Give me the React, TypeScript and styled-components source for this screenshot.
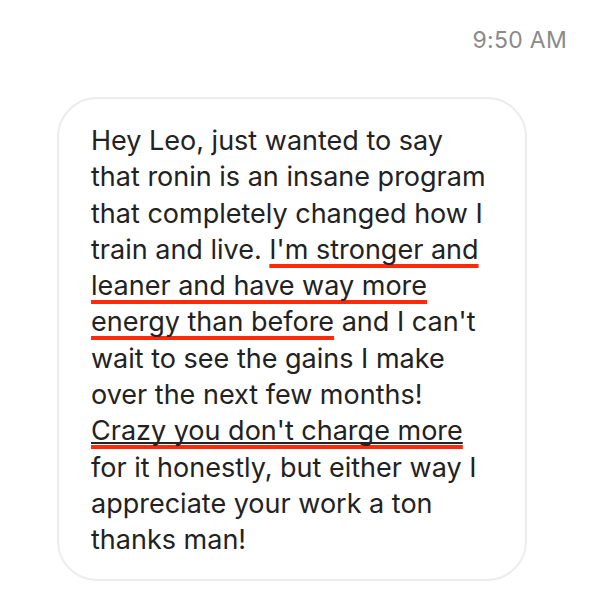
import React from "react";
import styled, { createGlobalStyle } from "styled-components";

const Global = createGlobalStyle`
  html, body { margin: 0; padding: 0; background: #ffffff; }
  body { font-family: Inter, "Noto Sans", "Liberation Sans", sans-serif; }
`;

const Page = styled.div`
  width: 600px;
  height: 592px;
  display: flex;
  flex-direction: column;
  box-sizing: border-box;
  padding: 25px 33px 0 57px;
`;

const Time = styled.div`
  align-self: flex-end;
  font-size: 23px;
  line-height: 30px;
  color: #8a8a8a;
  letter-spacing: 0.3px;
`;

const Bubble = styled.div`
  margin-top: 42px;
  width: 470px;
  box-sizing: border-box;
  border: 2px solid #ececec;
  border-radius: 40px;
  padding: 24px 16px 20px 32px;
`;

const Message = styled.p`
  margin: 0;
  font-size: 27px;
  line-height: 36.3px;
  color: #222222;
  white-space: nowrap;
`;

const Marker = styled.span`
  text-decoration: underline;
  text-decoration-color: #ff2a0a;
  text-decoration-thickness: 4px;
  text-underline-offset: 5px;
  text-decoration-skip-ink: none;
`;

const Link = styled.span`
  text-decoration: underline;
  text-decoration-color: #222222;
  text-decoration-thickness: 1.5px;
  text-underline-offset: 2px;
  text-decoration-skip-ink: none;
`;

export default function App() {
  return (
    <>
      <Global />
      <Page>
        <Time>9:50 AM</Time>
        <Bubble>
          <Message>
            Hey Leo, just wanted to say
            <br />
            that ronin is an insane program
            <br />
            that completely changed how I
            <br />
            train and live.{" "}
            <Marker>
              I'm stronger and
              <br />
              leaner and have way more
              <br />
              energy than before
            </Marker>{" "}
            and I can't
            <br />
            wait to see the gains I make
            <br />
            over the next few months!
            <br />
            <Marker>
              <Link>Crazy you don't charge more</Link>
            </Marker>
            <br />
            for it honestly, but either way I
            <br />
            appreciate your work a ton
            <br />
            thanks man!
          </Message>
        </Bubble>
      </Page>
    </>
  );
}
